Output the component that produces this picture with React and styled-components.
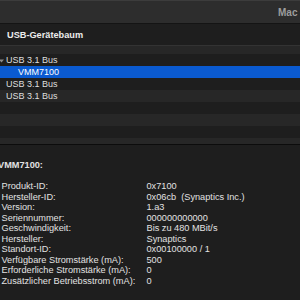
import React from 'react';
import styled, { createGlobalStyle } from 'styled-components';

const GlobalStyle = createGlobalStyle`
body {
  margin: 0;
  background: #1e1e1e;
  font-family: "Liberation Sans", Arial, sans-serif;
  overflow: hidden;
}
`;

const treeRows = [
    { label: 'USB 3.1 Bus', level: 0, open: true, alt: false },
    { label: 'VMM7100', level: 1, selected: true, alt: true },
    { label: 'USB 3.1 Bus', level: 0, alt: false },
    { label: 'USB 3.1 Bus', level: 0, alt: true },
    { label: '', level: 0, alt: false },
    { label: '', level: 0, alt: true },
    { label: '', level: 0, alt: false },
];

const details = [
    ['Produkt-ID:', '0x7100'],
    ['Hersteller-ID:', '0x06cb  (Synaptics Inc.)'],
    ['Version:', '1.a3'],
    ['Seriennummer:', '000000000000'],
    ['Geschwindigkeit:', 'Bis zu 480 MBit/s'],
    ['Hersteller:', 'Synaptics'],
    ['Standort-ID:', '0x00100000 / 1'],
    ['Verfügbare Stromstärke (mA):', '500'],
    ['Erforderliche Stromstärke (mA):', '0'],
    ['Zusätzlicher Betriebsstrom (mA):', '0'],
];

const App = () => {
    return (
        <Window>
            <GlobalStyle/>
            <Toolbar>
                <Title>Mac Pro</Title>
            </Toolbar>
            <ColumnHeader>USB-Gerätebaum</ColumnHeader>
            <Tree>
                <Row $alt $height={8}/>
                {treeRows.map((r, i) => (
                    <Row key={i} $alt={r.alt} $selected={r.selected}>
                        {r.open && (
                            <Disclosure width="5" height="4" viewBox="0 0 5 4">
                                <path d="M0 0.5 L5 0.5 L2.5 3.5 Z" fill="#8a8a8a"/>
                            </Disclosure>
                        )}
                        <RowLabel $level={r.level} $selected={r.selected}>{r.label}</RowLabel>
                    </Row>
                ))}
                <Row $alt $height={6}/>
            </Tree>
            <Details>
                <DeviceTitle>VMM7100:</DeviceTitle>
                <Props>
                    {details.map(([k, v]) => (
                        <React.Fragment key={k}>
                            <PropKey>{k}</PropKey>
                            <PropValue>{v}</PropValue>
                        </React.Fragment>
                    ))}
                </Props>
            </Details>
        </Window>
    );
};

export default App;

const Window = styled.div`
width: 300px;
height: 300px;
display: flex;
flex-direction: column;
overflow: hidden;
background: #1e1e1e;
`;

const Toolbar = styled.div`
height: 22px;
flex: none;
display: flex;
align-items: center;
padding-left: 278px;
background: #2d2d2d;
border-top: 1px solid #3c3c3c;
border-bottom: 1px solid #141414;
white-space: nowrap;
`;

const Title = styled.span`
font-size: 10px;
font-weight: bold;
color: #9d9d9d;
`;

const ColumnHeader = styled.div`
height: 21px;
flex: none;
display: flex;
align-items: center;
padding-left: 7px;
font-size: 9.2px;
font-weight: bold;
color: #ececec;
background: #1e1e1e;
border-bottom: 1px solid #333333;
`;

const Tree = styled.div`
flex: none;
display: flex;
flex-direction: column;
border-bottom: 1px solid #0c0c0c;
`;

const Row = styled.div`
position: relative;
height: ${p => p.$height || 12}px;
display: flex;
align-items: center;
background: ${p => p.$selected ? '#0a5ad0' : p.$alt ? '#272727' : '#1e1e1e'};
`;

const Disclosure = styled.svg`
position: absolute;
left: -1px;
top: 5px;
`;

const RowLabel = styled.span`
padding-left: ${p => 6 + p.$level * 12}px;
font-size: 9px;
color: ${p => p.$selected ? '#ffffff' : '#dedede'};
white-space: nowrap;
`;

const Details = styled.div`
flex: 1;
padding-top: 15px;
background: #1e1e1e;
font-size: 9.2px;
line-height: 10.5px;
color: #e2e2e2;
`;

const DeviceTitle = styled.div`
margin-left: -2px;
font-weight: bold;
`;

const Props = styled.div`
margin-top: 10.5px;
padding-left: 1.5px;
display: grid;
grid-template-columns: 145px 1fr;
`;

const PropKey = styled.div`
white-space: nowrap;
`;

const PropValue = styled.div`
white-space: pre;
`;
